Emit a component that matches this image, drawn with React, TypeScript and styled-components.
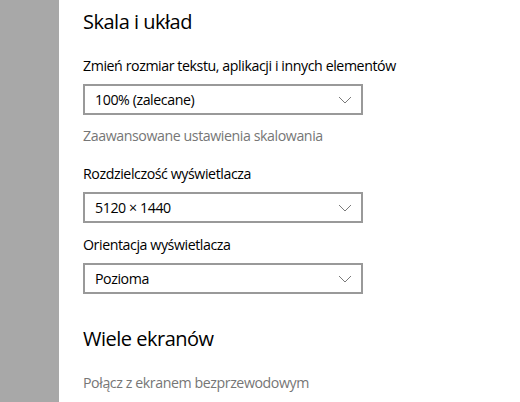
import React from 'react';
import styled, { createGlobalStyle } from 'styled-components';

const GlobalStyle = createGlobalStyle`
  html, body {
    margin: 0;
    padding: 0;
    background: #ffffff;
  }
  body {
    font-family: "Segoe UI", "Open Sans", "Noto Sans", sans-serif;
    color: #000000;
  }
`;

const Page = styled.div`
  display: flex;
  flex-direction: row;
  width: 520px;
  height: 402px;
  overflow: hidden;
`;

const Sidebar = styled.div`
  width: 59px;
  flex-shrink: 0;
  background: #a8a8a8;
`;

const Content = styled.div`
  flex: 1;
  display: flex;
  flex-direction: column;
  padding: 8px 0 0 24px;
`;

const Heading = styled.h2<{ $top?: number }>`
  margin: ${p => p.$top ?? 0}px 0 0 0;
  font-size: 20px;
  line-height: 28px;
  font-weight: 400;
  letter-spacing: -0.5px;
`;

const Label = styled.div<{ $top: number }>`
  margin-top: ${p => p.$top}px;
  font-size: 14.2px;
  line-height: 20px;
  letter-spacing: -0.42px;
`;

const Link = styled.div<{ $top: number }>`
  margin-top: ${p => p.$top}px;
  font-size: 14.2px;
  line-height: 20px;
  letter-spacing: -0.42px;
  color: #767676;
`;

const Select = styled.div`
  margin-top: 8px;
  box-sizing: border-box;
  width: 280px;
  height: 31px;
  border: 2px solid #999999;
  display: flex;
  flex-direction: row;
  align-items: center;
  justify-content: space-between;
  padding: 0 9px 0 10px;
  font-size: 14.2px;
  letter-spacing: -0.42px;
`;

const Chevron = () => (
  <svg width="14" height="8" viewBox="0 0 14 8">
    <path d="M1 1 L7 7 L13 1" fill="none" stroke="#7a7a7a" strokeWidth="1" />
  </svg>
);

function Dropdown({ value }: { value: string }) {
  return (
    <Select>
      <span>{value}</span>
      <Chevron />
    </Select>
  );
}

export default function App() {
  return (
    <Page>
      <GlobalStyle />
      <Sidebar />
      <Content>
        <Heading>Skala i układ</Heading>
        <Label $top={20}>Zmień rozmiar tekstu, aplikacji i innych elementów</Label>
        <Dropdown value="100% (zalecane)" />
        <Link $top={11}>Zaawansowane ustawienia skalowania</Link>
        <Label $top={18}>Rozdzielczość wyświetlacza</Label>
        <Dropdown value="5120 × 1440" />
        <Label $top={12}>Orientacja wyświetlacza</Label>
        <Dropdown value="Pozioma" />
        <Heading $top={31}>Wiele ekranów</Heading>
        <Link $top={20}>Połącz z ekranem bezprzewodowym</Link>
      </Content>
    </Page>
  );
}
